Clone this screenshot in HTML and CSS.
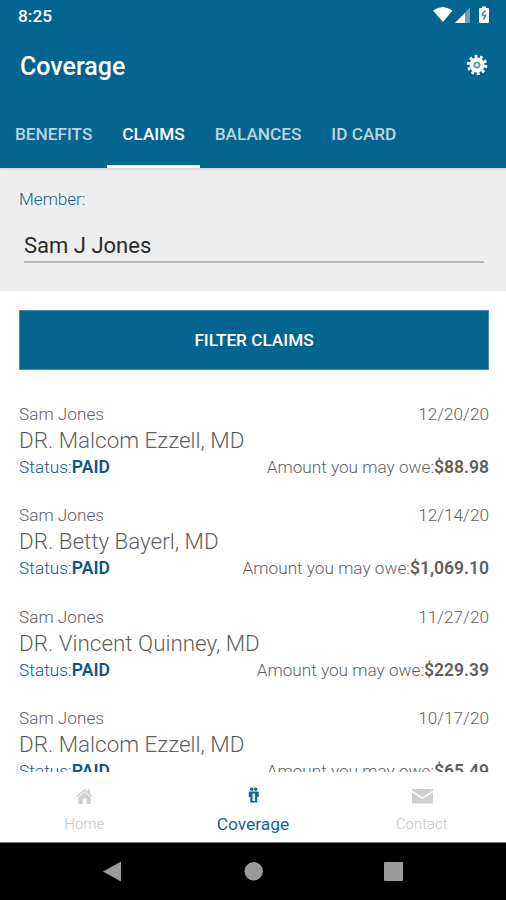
FILE: index.html
```html
<!DOCTYPE html>
<html lang="en">
<head>
  <meta charset="UTF-8">
  <meta name="viewport" content="width=device-width, initial-scale=1.0">
  <title>Coverage</title>
  <link rel="stylesheet" href="styles.css">
</head>
<body>
  <div class="app">
    <header class="header">
      <div class="status-bar">
        <span class="time">8:25</span>
        <svg class="status-icons" width="58" height="20" viewBox="0 0 58 20">
          <path d="M0 5.500Q9.750-1.500 19.500 5.500L10 17z" fill="#fff"/>
          <path d="M37 2.500V18H22z" fill="#fff" fill-opacity=".4"/>
          <path d="M32 8V18H22z" fill="#fff"/>
          <path d="M47 3h2V1.500h4V3h2q1 0 1 1v13q0 1-1 1h-8q-1 0-1-1V4q0-1 1-1z" fill="#fff"/>
          <path d="M52.500 5.500L49.500 8.500v2h3l-2 4" fill="none" stroke="#3c86a8" stroke-width="1.500"/>
        </svg>
      </div>
      <div class="title-bar">
        <h1>Coverage</h1>
        <svg class="gear" width="22" height="22" viewBox="-11 -11 22 22">
          <circle r="5.400" fill="none" stroke="#fff" stroke-width="4.200"/>
          <circle r="8.700" fill="none" stroke="#fff" stroke-width="3" stroke-dasharray="2.900 2.566"/>
          <circle r="3.300" fill="#5f9dba"/>
          <circle r="1.800" fill="#e6f0f5"/>
        </svg>
      </div>
      <nav class="tabs">
        <a class="tab">BENEFITS</a>
        <a class="tab active">CLAIMS</a>
        <a class="tab">BALANCES</a>
        <a class="tab">ID CARD</a>
      </nav>
    </header>

    <section class="member">
      <div class="member-label">Member:</div>
      <div class="member-name">Sam J Jones</div>
    </section>

    <main class="claims-list">
      <button class="filter">FILTER CLAIMS</button>

      <div class="claim">
        <div class="row"><span>Sam Jones</span><span>12/20/20</span></div>
        <div class="doctor">DR. Malcom Ezzell, MD</div>
        <div class="row"><span class="status">Status:<b>PAID</b></span><span>Amount you may owe:<b>$88.98</b></span></div>
      </div>
      <div class="claim">
        <div class="row"><span>Sam Jones</span><span>12/14/20</span></div>
        <div class="doctor">DR. Betty Bayerl, MD</div>
        <div class="row"><span class="status">Status:<b>PAID</b></span><span>Amount you may owe:<b>$1,069.10</b></span></div>
      </div>
      <div class="claim">
        <div class="row"><span>Sam Jones</span><span>11/27/20</span></div>
        <div class="doctor">DR. Vincent Quinney, MD</div>
        <div class="row"><span class="status">Status:<b>PAID</b></span><span>Amount you may owe:<b>$229.39</b></span></div>
      </div>
      <div class="claim">
        <div class="row"><span>Sam Jones</span><span>10/17/20</span></div>
        <div class="doctor">DR. Malcom Ezzell, MD</div>
        <div class="row"><span class="status">Status:<b>PAID</b></span><span>Amount you may owe:<b>$65.49</b></span></div>
      </div>
    </main>

    <nav class="bottom-nav">
      <a class="nav-item">
        <svg width="24" height="24" viewBox="0 0 24 24" fill="#cfcfcf">
          <path d="M4.500 12L12.500 5l3 2.600V5.500H18v4.300l2.500 2.200-1 1-7-6-7 6z"/>
          <path d="M6.300 13.500l6.200-5.400 6.200 5.400V20h-4.200v-5.500h-3.800V20H6.300z"/>
        </svg>
        <span>Home</span>
      </a>
      <a class="nav-item selected">
        <svg width="24" height="24" viewBox="0 0 24 24" fill="#15648f">
          <circle cx="10.700" cy="5.200" r="1.700"/>
          <circle cx="14.700" cy="5.200" r="1.700"/>
          <path d="M9 7.500h7.500q1.300 0 1.300 1.300v4.200H16.200v5.500H9.300V13H7.700V8.800q0-1.300 1.300-1.300z"/>
          <path d="M11.400 9.500h2.700v7.500h-2.700z" fill="#dbe9f1"/>
        </svg>
        <span>Coverage</span>
      </a>
      <a class="nav-item">
        <svg width="24" height="24" viewBox="0 0 24 24" fill="#cfcfcf">
          <path d="M2 5h21v1.500L12.500 13 2 6.500z"/>
          <path d="M2 8.500L12.500 15 23 8.500V19.500H2z"/>
        </svg>
        <span>Contact</span>
      </a>
    </nav>

    <footer class="system-bar">
      <svg width="20" height="22" viewBox="0 0 20 22"><path d="M0 10.500L18 .5v20z" fill="#9b9b9b"/></svg>
      <svg width="20" height="20" viewBox="0 0 20 20"><circle cx="10.700" cy="9.300" r="9.200" fill="#9b9b9b"/></svg>
      <svg width="20" height="20" viewBox="0 0 20 20"><rect x="1" y="0" width="19" height="19" rx="1" fill="#9b9b9b"/></svg>
    </footer>
  </div>
</body>
</html>
```
FILE: styles.css
```css
* {
  box-sizing: border-box;
  margin: 0;
  padding: 0;
}

body {
  font-family: Roboto, sans-serif;
  background: #fff;
  color: #5f5f5f;
}

.app {
  width: 506px;
  height: 900px;
  display: flex;
  flex-direction: column;
  overflow: hidden;
}

.header {
  height: 168px;
  flex: none;
  background: #02658f;
  color: #fff;
}

.status-bar {
  height: 32px;
  padding: 5px 15px 0 18px;
  display: flex;
  justify-content: space-between;
}

.time {
  font-size: 17.3px;
  line-height: 22px;
  font-weight: 500;
}

.title-bar {
  height: 68px;
  padding: 1px 18px 0 20px;
  display: flex;
  justify-content: space-between;
  align-items: center;
}

h1 {
  font-size: 25px;
  line-height: 28px;
  font-weight: 500;
}

.gear {
  margin-top: -4px;
}

.tabs {
  height: 68px;
  display: flex;
}

.tab {
  padding: 0 15px;
  font-size: 17.2px;
  line-height: 68px;
  font-weight: 500;
  white-space: nowrap;
  color: #bfd3df;
}

.tab.active {
  color: #fff;
  border-bottom: 3px solid #fff;
}

.member {
  height: 123px;
  flex: none;
  padding: 20px 22px 0 19px;
  background: #eee;
  box-shadow: inset 0 3px 3px -2px #ccc;
}

.member-label {
  font-size: 17.1px;
  line-height: 22px;
  font-weight: 300;
  color: #15648f;
}

.member-name {
  margin: 21px 0 0 5px;
  height: 32px;
  font-size: 22px;
  line-height: 29px;
  color: #2a2a2a;
  border-bottom: 2px solid #b5b5b5;
}

.claims-list {
  height: 481px;
  flex: none;
  padding: 19px 17px 0 19px;
  overflow: hidden;
}

.filter {
  display: block;
  width: 100%;
  height: 60px;
  margin-bottom: 32px;
  border: 1px solid #4a8dae;
  background: #02658f;
  color: #fff;
  font: 500 17.2px Roboto, sans-serif;
}

.claim {
  height: 101.3px;
}

.row {
  display: flex;
  justify-content: space-between;
  font-size: 17.2px;
  line-height: 24px;
  font-weight: 300;
}

.row b {
  font-size: 17.5px;
  font-weight: 600;
}

.doctor {
  font-size: 22.4px;
  line-height: 29px;
  font-weight: 300;
}

.status {
  color: #0f558a;
  letter-spacing: .08px;
}

.bottom-nav {
  height: 70px;
  flex: none;
  display: flex;
  padding-top: 12px;
}

.nav-item {
  flex: 1;
  display: flex;
  flex-direction: column;
  align-items: center;
  font-size: 15px;
  line-height: 32px;
  font-weight: 300;
  color: #c4c4c4;
}

.selected {
  font-size: 17.4px;
  font-weight: 400;
  color: #15648f;
}

.system-bar {
  height: 58px;
  flex: none;
  background: #000;
  border-top: 1px solid #777;
  display: flex;
  justify-content: center;
  align-items: center;
  gap: 120px;
}
```
